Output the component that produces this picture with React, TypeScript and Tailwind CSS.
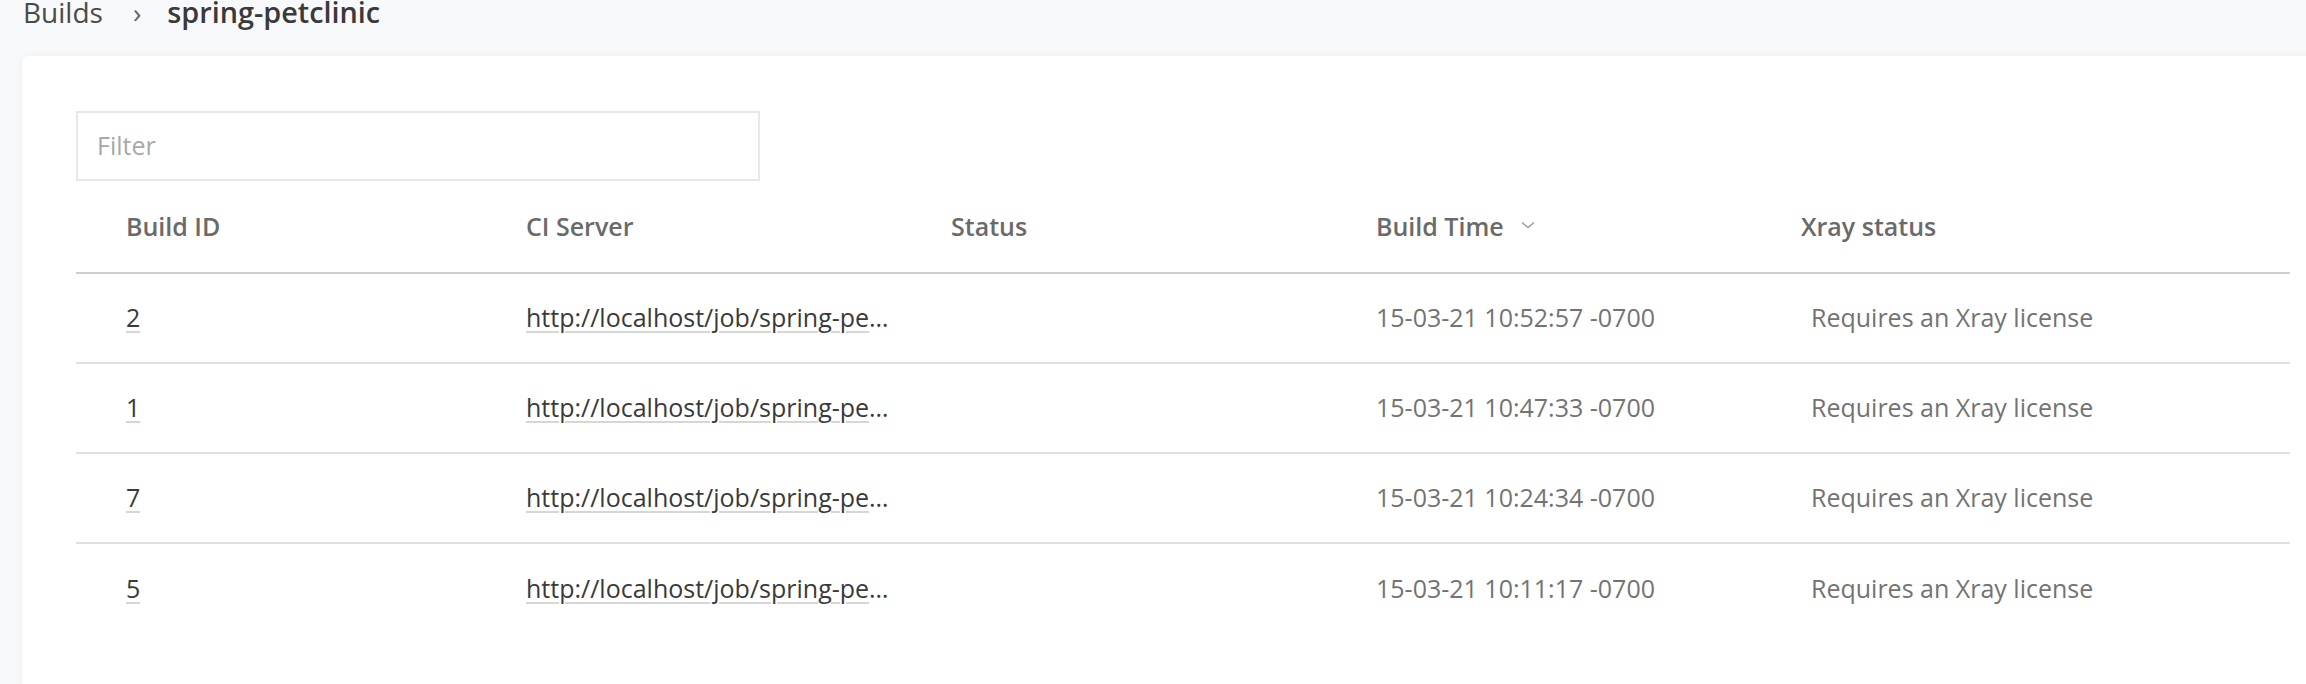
import React from "react";

const rows = [
  { id: "2", url: "http://localhost/job/spring-petclinic/2/", time: "15-03-21 10:52:57 -0700" },
  { id: "1", url: "http://localhost/job/spring-petclinic/1/", time: "15-03-21 10:47:33 -0700" },
  { id: "7", url: "http://localhost/job/spring-petclinic/7/", time: "15-03-21 10:24:34 -0700" },
  { id: "5", url: "http://localhost/job/spring-petclinic/5/", time: "15-03-21 10:11:17 -0700" },
];

export default function App() {
  return (
    <div
      className="w-[2306px] h-[684px] overflow-hidden bg-[#f8f9fb]"
      style={{ fontFamily: '"Open Sans", "Noto Sans", sans-serif' }}
    >
      <div className="h-[56px] pl-[23px] flex items-start">
        <div className="mt-[-2px] flex items-center text-[28px] leading-[28px]">
          <span className="text-[#4a4a4a]">Builds</span>
          <span className="ml-[30px] mr-[26px] text-[#666]">›</span>
          <span className="font-semibold text-[#3a3a3a] text-[28.8px]">spring-petclinic</span>
        </div>
      </div>
      <div className="ml-[22px] w-[2322px] h-[700px] bg-white rounded-[6px] shadow-[0_0_10px_rgba(0,0,0,0.05)] pt-[55px] px-[54px]">
        <div className="w-[684px] h-[70px] border-2 border-[#e8e8e8] flex items-center pl-[19px]">
          <input
            className="w-full outline-none text-[25px] text-[#444] placeholder:text-[#a8a8a8] bg-transparent"
            placeholder="Filter"
          />
        </div>
        <div className="w-[2214px]">
          <div className="grid grid-cols-[400px_425px_425px_425px_1fr] h-[93px] items-center border-b-2 border-[#cfcfcf] text-[25px] font-semibold text-[#6a6a6a]">
            <div className="pl-[50px]">Build ID</div>
            <div className="pl-[50px]">CI Server</div>
            <div className="pl-[50px]">Status</div>
            <div className="pl-[50px] flex items-center gap-[17px]">
              <span>Build Time</span>
              <svg width="14" height="8" viewBox="0 0 14 8" fill="none" className="mt-[-4px]">
                <path d="M1 1.5L7 6.5L13 1.5" stroke="#9a9a9a" strokeWidth="1.4" />
              </svg>
            </div>
            <div className="pl-[50px]">Xray status</div>
          </div>
          {rows.map((r, i) => (
            <div
              key={r.id}
              className={
                "grid grid-cols-[400px_425px_425px_425px_1fr] h-[90px] items-center text-[25px] " +
                (i < rows.length - 1 ? "border-b-2 border-[#e0e0e0]" : "")
              }
            >
              <div className="pl-[50px]">
                <span className="text-[#3a3a3a] underline decoration-2 decoration-[#d6d6d6] underline-offset-[4px]">
                  {r.id}
                </span>
              </div>
              <div className="pl-[50px]">
                <div className="w-[366px] truncate text-[#3a3a3a]">
                  <span className="underline decoration-2 decoration-[#d6d6d6] underline-offset-[4px]">{r.url}</span>
                </div>
              </div>
              <div className="pl-[50px]"></div>
              <div className="pl-[50px] text-[#737373]">{r.time}</div>
              <div className="pl-[60px] text-[#737373]">Requires an Xray license</div>
            </div>
          ))}
        </div>
      </div>
    </div>
  );
}
